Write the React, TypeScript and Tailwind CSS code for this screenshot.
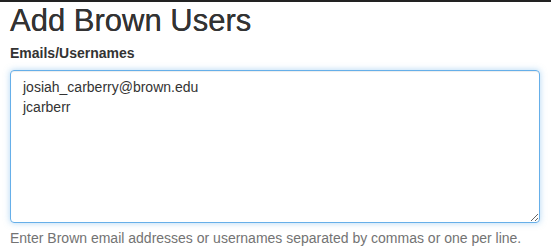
export default function App() {
  return (
    <div className="h-[251px] w-[551px] overflow-hidden bg-white border-t-2 border-[#222] font-['Liberation_Sans',Arial,sans-serif] text-[#333]">
      <div className="px-[10px]">
        <h1 className="mt-[2px] text-[31px] leading-[34px] font-normal text-[#333] [text-shadow:0_0_0.4px_#333]">Add Brown Users</h1>
        <label className="mt-[5px] block text-[14px] leading-[20px] font-bold text-[#333]">Emails/Usernames</label>
        <textarea
          className="mt-[7px] block h-[153px] w-[530px] resize-y rounded-[4px] border border-[#66afe9] px-[12px] py-[6px] text-[14px] leading-[20px] text-[#333] outline-none shadow-[inset_0_1px_1px_rgba(0,0,0,0.075),0_0_6px_rgba(102,175,233,0.5)]"
          defaultValue={"josiah_carberry@brown.edu\njcarberr"}
        />
        <p className="mt-[5px] text-[14px] leading-[20px] text-[#737373]">
          Enter Brown email addresses or usernames separated by commas or one per line.
        </p>
      </div>
    </div>
  );
}
